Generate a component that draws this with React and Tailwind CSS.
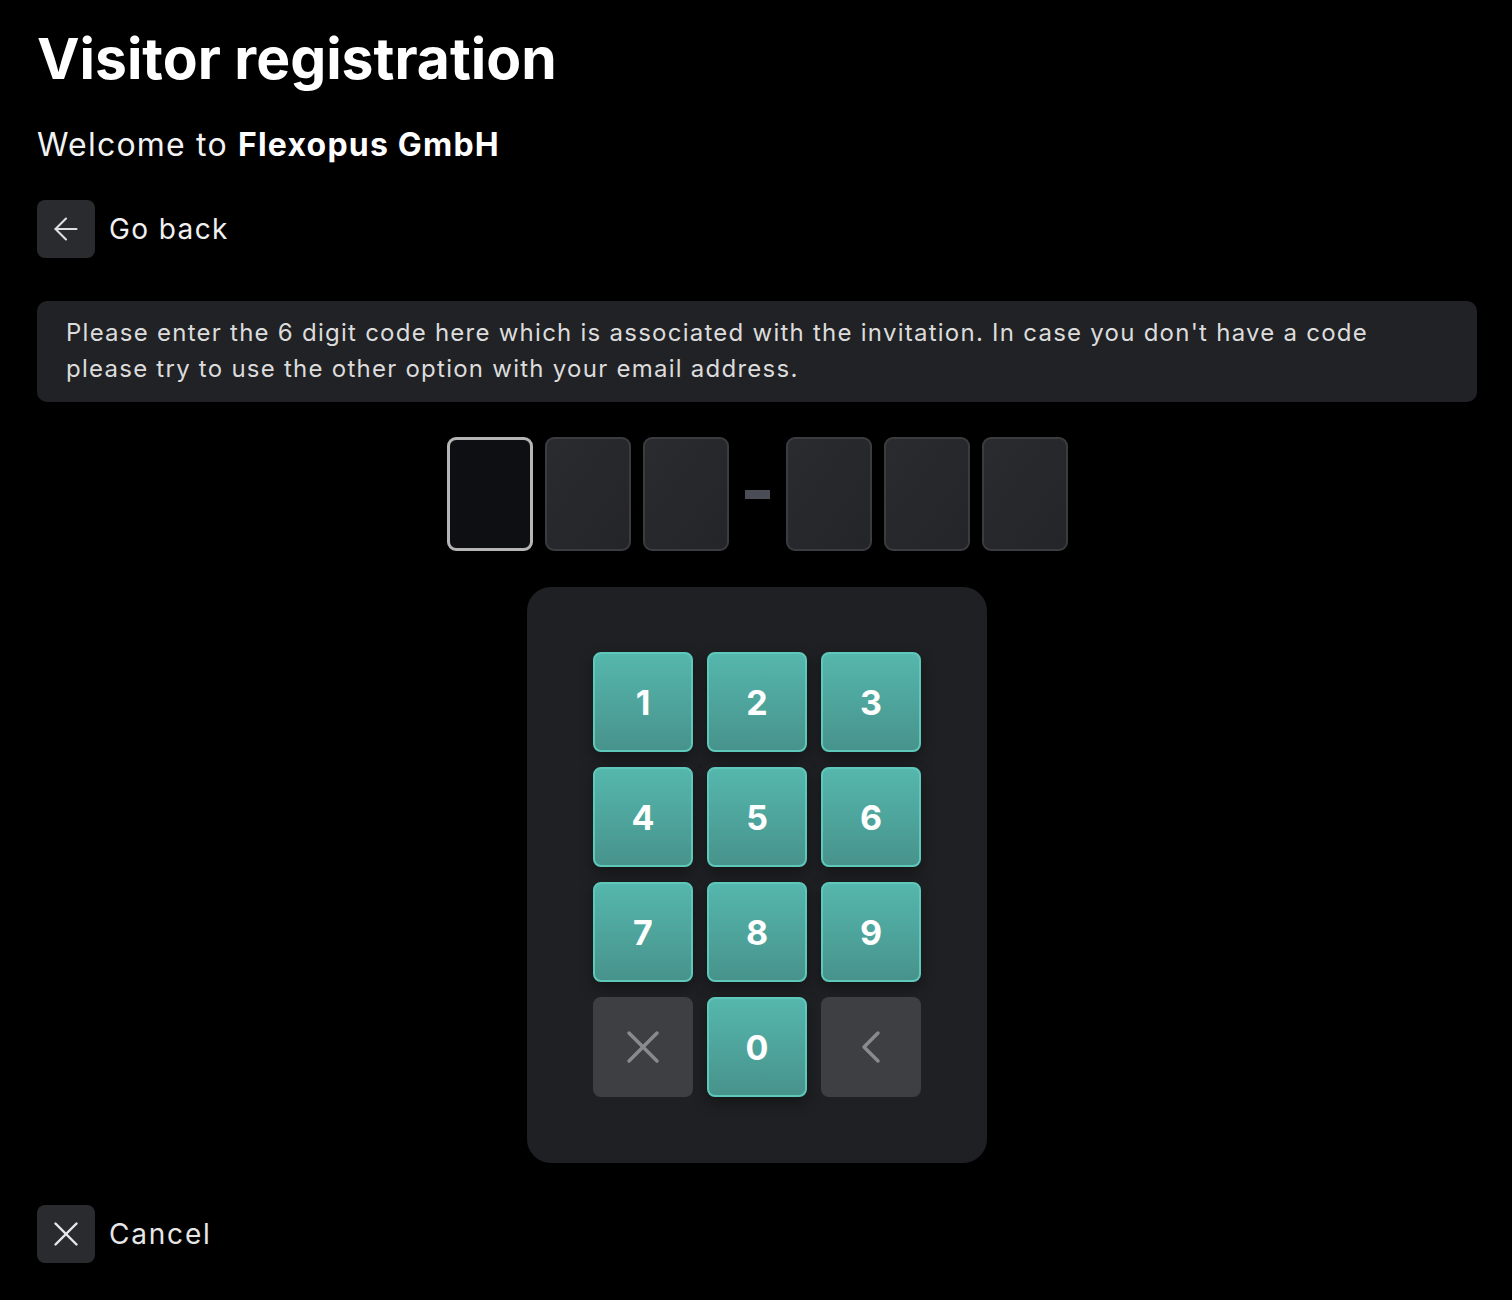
import { ArrowLeft, X, ChevronLeft } from 'lucide-react';

const digits = ['1', '2', '3', '4', '5', '6', '7', '8', '9'];

function CodeBox({ active }) {
  if (active) {
    return <div className="w-[86px] h-[114px] rounded-[9px] border-[3px] border-[#b5b5b5] bg-[#0e0f13]" />;
  }
  return (
    <div className="w-[86px] h-[114px] rounded-[9px] border-2 border-[#3b3c40] bg-gradient-to-br from-[#2a2b2f] to-[#242529]" />
  );
}

function Key({ children }) {
  return (
    <button className="w-[100px] h-[100px] rounded-[8px] border-2 border-[#5ec8ba] bg-gradient-to-b from-[#55b7ad] to-[#47938c] shadow-[0_6px_14px_rgba(0,0,0,0.35)] flex items-center justify-center text-white text-[34px] font-bold">
      {children}
    </button>
  );
}

function GrayKey({ children }) {
  return (
    <button className="w-[100px] h-[100px] rounded-[8px] bg-[#3e3f43] flex items-center justify-center text-[#8a8a8d]">
      {children}
    </button>
  );
}

export default function App() {
  return (
    <div className="min-h-[1300px] bg-black text-white pl-[37px] pr-[35px] pt-[24px] font-['Inter',sans-serif]">
      <h1 className="text-[57px] font-bold leading-[70px]">Visitor registration</h1>

      <p className="mt-[31px] text-[32px] leading-[40px] tracking-[1.2px] text-[#f2f2f2]">
        Welcome to <span className="font-bold text-white">Flexopus GmbH</span>
      </p>

      <div className="mt-[35px] flex items-center gap-[14px]">
        <button className="w-[58px] h-[58px] rounded-[8px] bg-[#2a2b2f] flex items-center justify-center text-[#e0e0e2]">
          <ArrowLeft size={36} strokeWidth={1.4} />
        </button>
        <span className="text-[28px] tracking-[1.4px] text-[#f0f0f0]">Go back</span>
      </div>

      <div className="mt-[43px] rounded-[10px] bg-[#212225] pl-[29px] pr-[80px] pt-[14px] pb-[15px] text-[24px] leading-[36px] tracking-[1.25px] text-[#dcdcdc]">
        Please enter the 6 digit code here which is associated with the invitation. In case you don't have a code please try to use the other option with your email address.
      </div>

      <div className="mt-[35px] flex justify-center items-center">
        <div className="flex gap-[12px]">
          <CodeBox active />
          <CodeBox />
          <CodeBox />
        </div>
        <div className="mx-[16px] w-[25px] h-[9px] bg-[#4a4d56]" />
        <div className="flex gap-[12px]">
          <CodeBox />
          <CodeBox />
          <CodeBox />
        </div>
      </div>

      <div className="mt-[36px] flex justify-center">
        <div className="w-[460px] rounded-[24px] bg-[#1f2023] px-[64px] pt-[65px] pb-[66px] flex justify-center">
          <div className="grid grid-cols-3 gap-x-[14px] gap-y-[15px]">
            {digits.map((d) => (
              <Key key={d}>{d}</Key>
            ))}
            <GrayKey>
              <X size={56} strokeWidth={1.5} />
            </GrayKey>
            <Key>0</Key>
            <GrayKey>
              <ChevronLeft size={56} strokeWidth={1.5} />
            </GrayKey>
          </div>
        </div>
      </div>

      <div className="mt-[42px] flex items-center gap-[14px]">
        <button className="w-[58px] h-[58px] rounded-[8px] bg-[#2a2b2f] flex items-center justify-center text-[#e8e8ea]">
          <X size={42} strokeWidth={1.4} />
        </button>
        <span className="text-[28px] tracking-[1.8px] text-[#e6e6e6]">Cancel</span>
      </div>
    </div>
  );
}
